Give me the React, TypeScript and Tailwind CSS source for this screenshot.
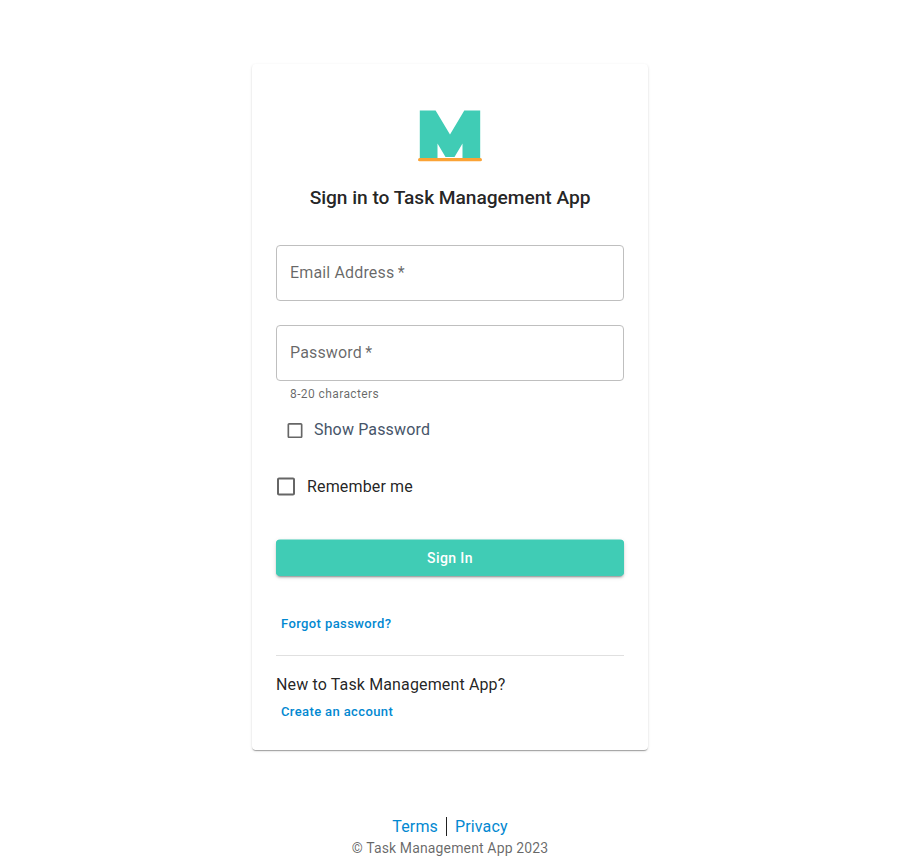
import React from 'react';

function Field({ label, type }: { label: string; type: string }) {
  return (
    <label className="relative block h-14 rounded-[4px] border border-[#bfbfbf]">
      <span className="block px-[13px] pt-[15px] text-[16px] leading-[23px] tracking-[0.15px] text-black/60">
        {label}&#8201;*
      </span>
      <input type={type} className="absolute inset-0 w-full bg-transparent px-[13px] outline-none" />
    </label>
  );
}

function Box({ className }: { className: string }) {
  return (
    <svg viewBox="0 0.5 24 24" className={className} fill="#666666">
      <path d="M19 5v14H5V5h14m0-2H5c-1.1 0-2 .9-2 2v14c0 1.1.9 2 2 2h14c1.1 0 2-.9 2-2V5c0-1.1-.9-2-2-2z" />
    </svg>
  );
}

export default function App() {
  return (
    <div className="flex h-[859px] flex-col items-center overflow-hidden bg-white pt-16 font-['Roboto',sans-serif] text-black/87">
      <main className="flex h-[686.4px] w-[396px] shrink-0 flex-col rounded-[4px] bg-white px-6 pt-[46px] shadow-[0px_2px_1px_-1px_rgba(0,0,0,0.2),0px_1px_1px_0px_rgba(0,0,0,0.14),0px_1px_3px_0px_rgba(0,0,0,0.12)]">
        <svg viewBox="0 0 64 52" className="mx-auto h-[52px] w-16 shrink-0">
          <path d="M1.8.6h15.8L32 24.4 46.3.6h15.9V49H44.5V33.6l-8 13.4h-9l-8-13.4V49H1.8z" fill="#40ccb5" />
          <rect y="48" width="64" height="3.3" rx="1.65" fill="#fba336" />
        </svg>
        <h1 className="mt-5 text-center text-[19.2px] leading-8 font-medium tracking-[-0.05px]">Sign in to Task Management App</h1>
        <form className="mt-[31px] flex flex-col">
          <Field label="Email Address" type="email" />
          <div className="h-6" />
          <Field label="Password" type="password" />
          <p className="mt-[3px] ml-[14px] text-[12px] leading-5 tracking-[0.4px] text-black/60">8-20 characters</p>
          <div className="mt-[14px] ml-[9px] flex h-6 items-center gap-[9px]">
            <Box className="mt-px h-5 w-5" />
            <span className="text-[16px] leading-6 tracking-[0.15px] text-[#475569]">Show Password</span>
          </div>
          <div className="mt-[33px] -ml-[2px] flex h-6 items-center gap-[9px]">
            <Box className="h-6 w-6" />
            <span className="text-[16px] leading-6 tracking-[0.15px]">Remember me</span>
          </div>
          <button type="button" className="mt-[40.5px] h-[36.5px] rounded-[4px] bg-[#40ccb5] pt-px text-[14px] font-medium tracking-[0.4px] text-white shadow-[0px_-0.5px_0px_0px_#40ccb5,0px_3px_1px_-2px_rgba(0,0,0,0.2),0px_2px_2px_0px_rgba(0,0,0,0.14),0px_1px_5px_0px_rgba(0,0,0,0.12)]">Sign In</button>
        </form>
        <a className="mt-[36px] ml-[5px] text-[13px] leading-6 font-medium tracking-[0.4px] text-[#0288d1]">Forgot password?</a>
        <hr className="mt-[19px] border-black/12" />
        <p className="mt-[17px] text-[16px] leading-6 tracking-[0.14px]">New to Task Management App?</p>
        <a className="mt-[3px] ml-[5px] text-[13px] leading-6 font-medium tracking-[0.38px] text-[#0288d1]">Create an account</a>
      </main>
      <footer className="mt-[64.6px] flex flex-col items-center">
        <div className="flex h-6 items-center text-[16px] tracking-[0.15px] text-[#0288d1]">
          <a>Terms</a>
          <span className="-mt-px mx-2 h-[19px] w-px bg-black/87" />
          <a>Privacy</a>
        </div>
        <p className="-mt-px text-[14px] leading-5 tracking-[0.14px] text-black/60">© Task Management App 2023</p>
      </footer>
    </div>
  );
}
